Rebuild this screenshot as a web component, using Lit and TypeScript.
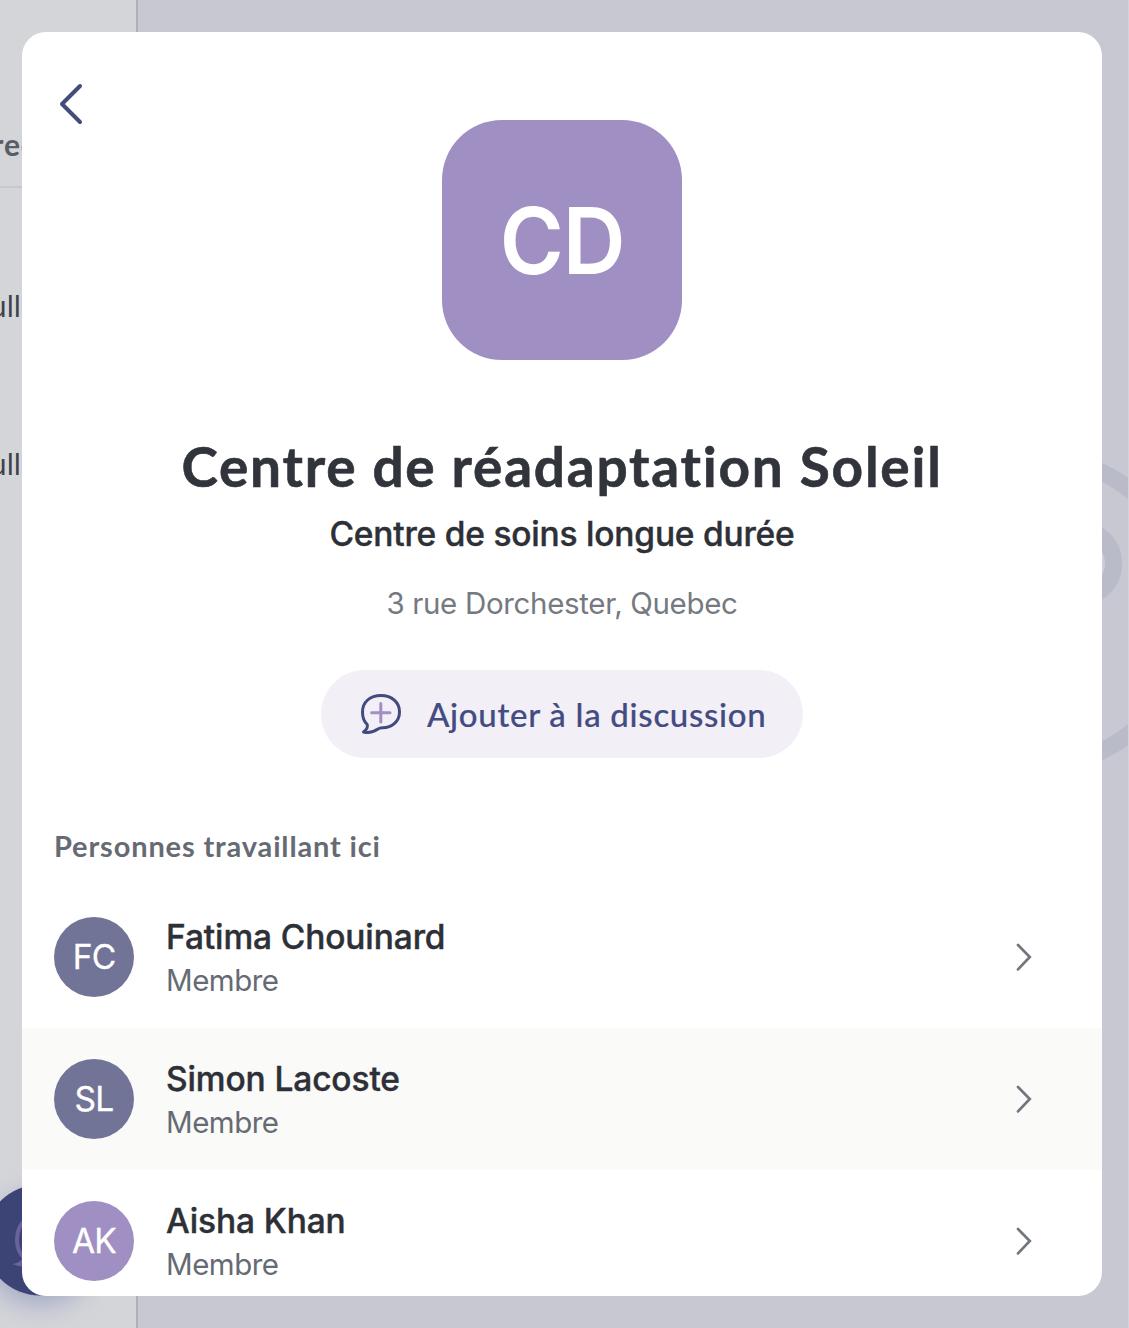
import { LitElement, html, css, svg } from "lit";
import { customElement, property } from "lit/decorators.js";

interface Person {
  initials: string;
  name: string;
  role: string;
  tone: "slate" | "lilac";
}

const PEOPLE: Person[] = [
  { initials: "FC", name: "Fatima Chouinard", role: "Membre", tone: "slate" },
  { initials: "SL", name: "Simon Lacoste", role: "Membre", tone: "slate" },
  { initials: "AK", name: "Aisha Khan", role: "Membre", tone: "lilac" },
];

@customElement("person-row")
class PersonRow extends LitElement {
  @property({ attribute: false }) person!: Person;

  static styles = css`
    :host {
      display: flex;
      flex: none;
      align-items: center;
      box-sizing: border-box;
      height: 142px;
      padding: 0 68px 0 32px;
      font-family: Inter, sans-serif;
    }
    .avatar {
      display: flex;
      align-items: center;
      justify-content: center;
      width: 80px;
      height: 80px;
      border-radius: 50%;
      color: #fff;
      font-size: 33.5px;
      letter-spacing: -0.8px;
      -webkit-text-stroke: 0.3px #fff;
    }
    .slate {
      background: #717496;
    }
    .lilac {
      background: #a08fc2;
    }
    .text {
      flex: 1;
      padding-left: 32px;
      padding-top: 3px;
    }
    .name {
      font-size: 33.5px;
      line-height: 44px;
      font-weight: 500;
      letter-spacing: -0.12px;
      -webkit-text-stroke: 0.4px #2d3036;
      color: #2d3036;
    }
    .role {
      margin-top: -1px;
      font-size: 29.5px;
      line-height: 44px;
      letter-spacing: -0.5px;
      color: #666b73;
    }
    .chevron {
      width: 20px;
      height: 32px;
    }
  `;

  render() {
    const p = this.person;
    return html`
      <div class="avatar ${p.tone}">${p.initials}</div>
      <div class="text">
        <div class="name">${p.name}</div>
        <div class="role">${p.role}</div>
      </div>
      <svg class="chevron" viewBox="0 0 20 32" fill="none" stroke="#71767e" stroke-width="2.7" stroke-linecap="round" stroke-linejoin="miter">
        <path d="M4 4 L15.8 16 L4 28.4" />
      </svg>
    `;
  }
}

@customElement("app-root")
class AppRoot extends LitElement {
  static styles = css`
    :host {
      display: block;
      position: relative;
      width: 1129px;
      height: 1328px;
      overflow: hidden;
      font-family: Inter, sans-serif;
    }
    .backdrop {
      position: absolute;
      inset: 0;
      display: flex;
      background: #c8c8d3;
    }
    .sidebar {
      box-sizing: border-box;
      width: 138px;
      border-right: 2px solid #b0b1bc;
      background: #d4d5d9;
    }
    .side-head {
      box-sizing: border-box;
      height: 188px;
      padding-top: 126px;
      border-bottom: 2px solid #c7c8cd;
      font: 700 30px/36px Lato, sans-serif;
      letter-spacing: 0.8px;
      color: #585d66;
    }
    .side-item {
      height: 158px;
      line-height: 236px;
      font-size: 29.5px;
      color: #404248;
    }
    .side-head span,
    .side-item span {
      display: flex;
      justify-content: flex-end;
      width: 21px;
      white-space: nowrap;
    }
    .side-head span {
      width: 36px;
    }
    .art {
      position: absolute;
      inset: 0;
      width: 1129px;
      height: 1328px;
    }
    .modal {
      position: absolute;
      left: 22px;
      top: 32px;
      display: flex;
      flex-direction: column;
      width: 1080px;
      height: 1264px;
      overflow: hidden;
      border-radius: 24px;
      background: #fff;
    }
    .bar {
      flex: none;
      height: 88px;
      padding-left: 32px;
    }
    .back {
      width: 36px;
      height: 48px;
      margin-top: 48px;
    }
    .profile {
      display: flex;
      flex: none;
      flex-direction: column;
      align-items: center;
      white-space: nowrap;
    }
    .logo {
      display: flex;
      align-items: center;
      justify-content: center;
      width: 240px;
      height: 240px;
      border-radius: 60px;
      background: #a08fc2;
      color: #fff;
      font-size: 92px;
      font-weight: 600;
      letter-spacing: -1px;
    }
    .logo span {
      transform: scaleX(0.945);
    }
    .title {
      margin: 74px 0 0;
      font: 700 55px/64px Lato, sans-serif;
      letter-spacing: 1.75px;
      -webkit-text-stroke: 0.6px #31343b;
      color: #31343b;
    }
    .kind {
      margin-top: 14px;
      font-size: 33.5px;
      line-height: 44px;
      font-weight: 500;
      letter-spacing: -0.2px;
      -webkit-text-stroke: 0.4px #2d3036;
      color: #2d3036;
    }
    .address {
      margin-top: 27px;
      font-size: 29.5px;
      line-height: 40px;
      letter-spacing: -0.33px;
      color: #757980;
    }
    .add {
      display: flex;
      align-items: center;
      box-sizing: border-box;
      width: 482px;
      height: 88px;
      margin-top: 47px;
      padding: 0 0 0 36px;
      border: 0;
      border-radius: 44px;
      background: #f2eff6;
      color: #434b82;
      font: 500 33px/40px Lato, sans-serif;
      letter-spacing: 0.7px;
      -webkit-text-stroke: 0.2px #434b82;
    }
    .bubble {
      width: 48px;
      height: 48px;
      margin-right: 22px;
    }
    .section {
      flex: none;
      margin: 68px 0 1px 32px;
      font: 700 29px/40px Lato, sans-serif;
      letter-spacing: 0.85px;
      color: #666b73;
    }
    .list {
      display: flex;
      flex-direction: column;
      margin-top: 19px;
    }
    .shaded {
      background: #fafaf9;
    }
  `;

  render() {
    return html`
      <div class="backdrop">
        <div class="sidebar">
          <div class="side-head"><span>rec</span></div>
          <div class="side-item"><span>ull</span></div>
          <div class="side-item"><span>ull</span></div>
        </div>
      </div>
      <svg class="art" viewBox="0 0 1129 1328" fill="none">
        <defs>
          <filter id="soft" x="-50%" y="-50%" width="200%" height="200%">
            <feGaussianBlur stdDeviation="14" />
          </filter>
        </defs>
        ${svg`
          <circle cx="1035" cy="611.5" r="154.5" stroke="#b9bbc9" stroke-width="17" />
          <circle cx="1080" cy="563.5" r="42.3" fill="#b9bbc9" />
          <circle cx="1080" cy="563.5" r="25" fill="#cdced7" />
          <circle cx="40" cy="1250" r="54" fill="#7c85b5" opacity="0.6" filter="url(#soft)" />
          <circle cx="40" cy="1240" r="55.5" fill="#3c4475" />
          <path d="M27 1218 Q17 1226 17 1240 Q17 1251 24 1258 Q24 1262 19 1264 Q26 1266 34 1262" stroke="#6c619f" stroke-width="4" />
        `}
        <path d="M1128.5 0 V1328" stroke="#d3d3dc" />
      </svg>
      <div class="modal">
        <div class="bar">
          <svg class="back" viewBox="0 0 36 48" fill="none" stroke="#444b7d" stroke-width="4" stroke-linecap="round" stroke-linejoin="round">
            <path d="M26 6 L8 24 L26 42" />
          </svg>
        </div>
        <div class="profile">
          <div class="logo"><span>CD</span></div>
          <h1 class="title">Centre de réadaptation Soleil</h1>
          <div class="kind">Centre de soins longue durée</div>
          <div class="address">3 rue Dorchester, Quebec</div>
          <button class="add">
            <svg class="bubble" viewBox="0 0 48 48" fill="none" stroke-width="3" stroke-linecap="round" stroke-linejoin="round">
              <path stroke="#434b7e" d="M24 5.5 C35 5.5 42.5 12.5 42.5 22 C42.5 31.5 35 37.6 25.5 37.8 C23 37.8 21.8 38.4 20.5 39.3 C17 41.8 12 43.2 6.5 42 C9.5 39.8 11 37 10.2 34.5 C7 31.5 5.5 27.5 5.5 22 C5.5 12 13 5.5 24 5.5 Z" />
              <path stroke="#a08fc2" d="M23.8 13.5 V32 M14.7 22.8 H33" />
            </svg>
            <span>Ajouter à la discussion</span>
          </button>
        </div>
        <div class="section">Personnes travaillant ici</div>
        <div class="list">
          ${PEOPLE.map(
            (p, i) => html`<person-row class=${i % 2 ? "shaded" : ""} .person=${p}></person-row>`
          )}
        </div>
      </div>
    `;
  }
}
